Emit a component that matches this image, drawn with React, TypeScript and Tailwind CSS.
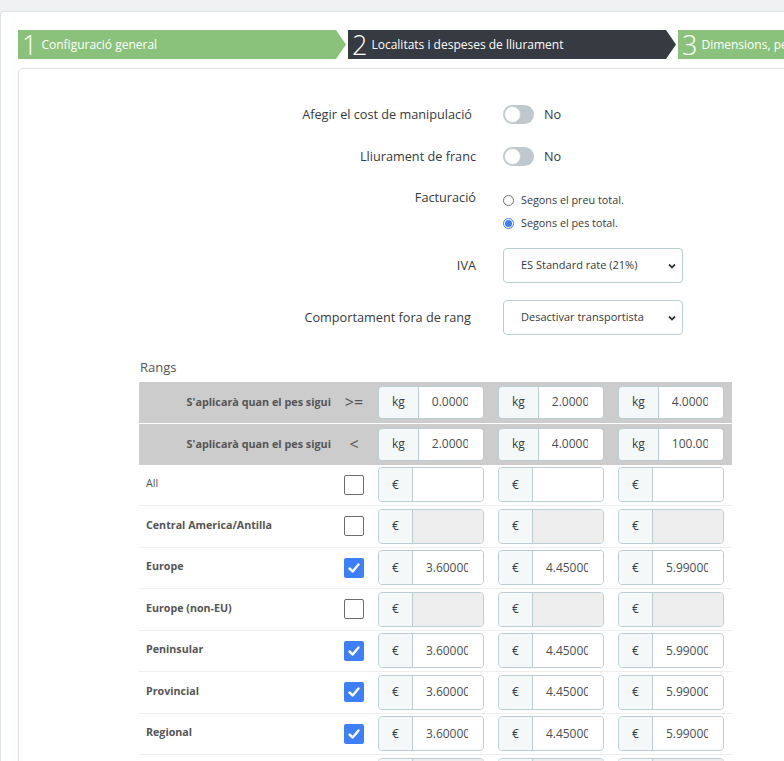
import React from 'react';

type Row = {
  name: string;
  bold: boolean;
  checked: boolean;
  disabled: boolean;
  values: string[];
};

const rows: Row[] = [
  { name: 'All', bold: false, checked: false, disabled: false, values: ['', '', ''] },
  { name: 'Central America/Antilla', bold: true, checked: false, disabled: true, values: ['', '', ''] },
  { name: 'Europe', bold: true, checked: true, disabled: false, values: ['3.600000', '4.450000', '5.990000'] },
  { name: 'Europe (non-EU)', bold: true, checked: false, disabled: true, values: ['', '', ''] },
  { name: 'Peninsular', bold: true, checked: true, disabled: false, values: ['3.600000', '4.450000', '5.990000'] },
  { name: 'Provincial', bold: true, checked: true, disabled: false, values: ['3.600000', '4.450000', '5.990000'] },
  { name: 'Regional', bold: true, checked: true, disabled: false, values: ['3.600000', '4.450000', '5.990000'] },
  { name: 'Resta del món', bold: true, checked: false, disabled: true, values: ['', '', ''] },
];

const headerRows = [
  { op: '>=', values: ['0.000000', '2.000000', '4.000000'] },
  { op: '<', values: ['2.000000', '4.000000', '100.000000'] },
];

function Step({ num, label, active }: { num: string; label: string; active?: boolean }) {
  const bg = active ? 'bg-[#363a41]' : 'bg-[#8bc27b]';
  const fill = active ? '#363a41' : '#8bc27b';
  return (
    <div className="flex w-[328px] h-[29px] flex-shrink-0">
      <div className={`flex-1 flex items-center pl-[4px] text-white ${bg}`}>
        <span className="text-[27px] font-light leading-none mr-[4px] -mt-[1px]">{num}</span>
        <span className="text-[12px]">{label}</span>
      </div>
      <svg width="10" height="29" viewBox="0 0 10 29" className="block">
        <polygon points="0,0 10,14.5 0,29" fill={fill} />
      </svg>
    </div>
  );
}

function Toggle() {
  return (
    <div className="flex items-center">
      <div className="w-[31px] h-[19px] rounded-full bg-[#bfc8cc] relative">
        <div className="absolute left-[1px] top-[1px] w-[17px] h-[17px] rounded-full bg-white border border-[#c6cfd3]" />
      </div>
      <span className="ml-[10px] text-[12.7px] text-[#363a41]">No</span>
    </div>
  );
}

function Radio({ checked, label }: { checked?: boolean; label: string }) {
  return (
    <div className="flex items-center h-[23px]">
      <span
        className={`w-[11px] h-[11px] rounded-full border flex items-center justify-center ${
          checked ? 'border-[#3b7cf6]' : 'border-[#6c7478]'
        }`}
      >
        {checked && <span className="w-[7px] h-[7px] rounded-full bg-[#3b7cf6]" />}
      </span>
      <span className="ml-[7px] text-[10.8px] text-[#363a41]">{label}</span>
    </div>
  );
}

function Select({ value }: { value: string }) {
  return (
    <div className="w-[180px] h-[35px] border border-[#bbcdd2] rounded-[4px] bg-white flex items-center justify-between pl-[17px] pr-[5px]">
      <span className="text-[11px] text-[#363a41]">{value}</span>
      <svg width="10" height="10" viewBox="0 0 10 10">
        <path d="M2 3.5 L5 6.5 L8 3.5" fill="none" stroke="#363a41" strokeWidth="1.8" />
      </svg>
    </div>
  );
}

function FormRow({
  label,
  children,
  className,
  labelPad,
}: {
  label: string;
  children: React.ReactNode;
  className?: string;
  labelPad?: string;
}) {
  return (
    <div className={`flex ${className ?? ''}`}>
      <div className={`w-[457px] text-right text-[12.7px] text-[#363a41] ${labelPad ?? 'pr-0'}`}>{label}</div>
      <div className="ml-[27px]">{children}</div>
    </div>
  );
}

function InputGroup({ addon, value, disabled, height }: { addon: string; value: string; disabled?: boolean; height: string }) {
  return (
    <div className={`flex w-[106px] ${height} border border-[#bbcdd2] rounded-[4px] overflow-hidden`}>
      <div className="flex items-center justify-center px-[13px] bg-[#f5f8f9] border-r border-[#bbcdd2] text-[12px] text-[#363a41]">
        {addon}
      </div>
      <input
        readOnly
        value={value}
        className={`flex-1 min-w-0 pl-[13px] pr-[15px] text-[12px] text-[#4a4f55] outline-none ${
          disabled ? 'bg-[#eeeeee]' : 'bg-white'
        }`}
      />
    </div>
  );
}

function Checkbox({ checked }: { checked: boolean }) {
  if (checked) {
    return (
      <div className="w-[20px] h-[20px] rounded-[2px] bg-[#3e7ef7] flex items-center justify-center">
        <svg width="14" height="14" viewBox="0 0 14 14">
          <path d="M2.5 7.5 L5.7 10.5 L11.5 3.5" fill="none" stroke="white" strokeWidth="2.4" strokeLinecap="round" strokeLinejoin="round" />
        </svg>
      </div>
    );
  }
  return <div className="w-[20px] h-[20px] rounded-[2px] border border-[#6c6c6c] bg-white" />;
}

export default function App() {
  return (
    <div className="w-[784px] min-h-[761px] overflow-hidden bg-[#eff1f2] font-['Open_Sans',sans-serif]">
      <div className="mt-[11px] w-[1100px] bg-white border-t border-l border-[#dde2e5] rounded-tl-[4px] pl-[17px] pt-[18px] pb-10">
        {/* Wizard steps */}
        <div className="flex gap-[2px]">
          <Step num="1" label="Configuració general" />
          <Step num="2" label="Localitats i despeses de lliurament" active />
          <Step num="3" label="Dimensions, pes i grup d'accés" />
        </div>

        {/* Panel */}
        <div className="mt-[9px] border border-[#dfe3e6] rounded-[5px] pt-[32px] pb-10">
          <FormRow label="Afegir el cost de manipulació" labelPad="pr-[4px]" className="items-center h-[28px]">
            <Toggle />
          </FormRow>
          <FormRow label="Lliurament de franc" className="items-center h-[28px] mt-[14px]">
            <Toggle />
          </FormRow>
          <FormRow label="Facturació" className="mt-[17px]">
            <div className="mt-[1px]">
              <Radio label="Segons el preu total." />
              <Radio checked label="Segons el pes total." />
            </div>
          </FormRow>
          <FormRow label="IVA" className="mt-[13px] items-center">
            <Select value="ES Standard rate (21%)" />
          </FormRow>
          <FormRow label="Comportament fora de rang" labelPad="pr-[5px]" className="mt-[17px] items-center">
            <Select value="Desactivar transportista" />
          </FormRow>

          {/* Ranges */}
          <div className="ml-[121px] mt-[23px] text-[13px] text-[#555]">Rangs</div>
          <div className="ml-[120px] mt-[4px] w-[593px]">
            {headerRows.map((h, i) => (
              <div key={i} className={`flex h-[41px] bg-[#cccccc] items-center ${i > 0 ? 'mt-[1px]' : ''}`}>
                <div className="w-[198px] text-right pr-[6px] text-[10.8px] font-bold text-[#555]">
                  S'aplicarà quan el pes sigui
                </div>
                <div className="w-[34px] text-center text-[16px] text-[#555]">{h.op}</div>
                {h.values.map((v, j) => (
                  <div key={j} className="w-[120px] pl-[7px]">
                    <InputGroup addon="kg" value={v} height="h-[33px]" />
                  </div>
                ))}
              </div>
            ))}
            {rows.map((r, i) => (
              <div key={i} className="flex h-[41.5px] items-center border-b border-[#eeeeee]">
                <div className={`w-[198px] pl-[7px] text-[10.7px] text-[#555] -mt-[3px] ${r.bold ? 'font-bold' : ''}`}>
                  {r.name}
                </div>
                <div className="w-[34px] flex justify-center">
                  <Checkbox checked={r.checked} />
                </div>
                {r.values.map((v, j) => (
                  <div key={j} className="w-[120px] pl-[7px]">
                    <InputGroup addon="€" value={v} disabled={r.disabled} height="h-[35px]" />
                  </div>
                ))}
              </div>
            ))}
          </div>
        </div>
      </div>
    </div>
  );
}
